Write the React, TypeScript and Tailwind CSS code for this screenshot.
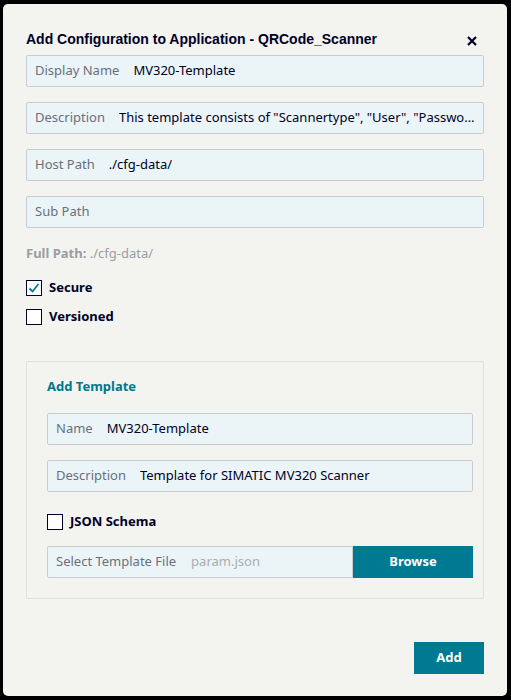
import React from "react";

const font = { fontFamily: '"Noto Sans", "Open Sans", sans-serif' };

function Field({ label, value, className = "" }: { label: string; value?: string; className?: string }) {
  return (
    <div className={`flex h-[32px] min-w-0 items-center overflow-hidden rounded-[2px] border border-[#c9ccd0] bg-[#ebf5f7] px-[8px] text-[13px] ${className}`}>
      <span className="shrink-0 whitespace-nowrap text-[#6b6f7a]">{label}</span>
      {value !== undefined && <span className="ml-[14px] min-w-0 truncate text-[#000028]">{value}</span>}
    </div>
  );
}

function Check({ checked, label }: { checked?: boolean; label: string }) {
  return (
    <div className="flex h-[18px] items-center gap-[7px]">
      <div className="flex h-[16px] w-[16px] items-center justify-center border border-[#000028] bg-white">
        {checked && (
          <svg width="14" height="14" viewBox="0 0 14 14">
            <path d="M2.5 7.5 L5.5 10.5 L11.5 3" fill="none" stroke="#007993" strokeWidth="1.8" />
          </svg>
        )}
      </div>
      <span className="text-[13px] font-bold text-[#000028]">{label}</span>
    </div>
  );
}

export default function App() {
  return (
    <div className="h-[700px] w-[511px] bg-black pl-[3px] pt-[4px]" style={font}>
      <div className="flex h-[692px] w-[504px] flex-col rounded-[5px] bg-[#f3f3ef] pl-[23px] pr-[23px]">
        <div className="mt-[25px] flex h-[20px] items-center justify-between">
          <span
            className="text-[14px] font-bold text-[#000028]"
            style={{ fontFamily: '"Liberation Sans", Arial, sans-serif' }}
          >
            Add Configuration to Application - QRCode_Scanner
          </span>
          <svg width="12" height="12" viewBox="0 0 12 12" className="mr-[6px] mt-[3px]">
            <path d="M2 2 L10 10 M10 2 L2 10" stroke="#000028" strokeWidth="2.2" />
          </svg>
        </div>
        <Field className="mt-[6px]" label="Display Name" value="MV320-Template" />
        <Field className="mt-[15px]" label="Description" value={'This template consists of "Scannertype", "User", "Passwor...'} />
        <Field className="mt-[15px]" label="Host Path" value="./cfg-data/" />
        <Field className="mt-[15px]" label="Sub Path" />
        <div className="mt-[16px] text-[13px] text-[#9a9ea5]">
          <span className="font-bold">Full Path:</span> ./cfg-data/
        </div>
        <div className="mt-[15px]">
          <Check checked label="Secure" />
        </div>
        <div className="mt-[11px]">
          <Check label="Versioned" />
        </div>
        <div className="mt-[35px] flex flex-col rounded-[2px] border border-[#dfe0df] pb-[20px] pl-[20px] pr-[10px]">
          <div className="mt-[15px] text-[13px] font-bold text-[#00788a]">Add Template</div>
          <Field className="mt-[17px]" label="Name" value="MV320-Template" />
          <Field className="mt-[15px]" label="Description" value="Template for SIMATIC MV320 Scanner" />
          <div className="mt-[21px]">
            <Check label="JSON Schema" />
          </div>
          <div className="mt-[15px] flex h-[32px]">
            <div className="flex flex-1 items-center rounded-l-[2px] border border-[#c9ccd0] bg-[#ebf5f7] px-[8px] text-[13px]">
              <span className="text-[#6b6f7a]">Select Template File</span>
              <span className="ml-[15px] text-[#a9adb3]">param.json</span>
            </div>
            <button className="w-[120px] bg-[#007993] text-[13px] font-bold text-white">Browse</button>
          </div>
        </div>
        <div className="mt-[43px] flex justify-end">
          <button className="h-[32px] w-[70px] bg-[#007993] text-[13px] font-bold text-white">Add</button>
        </div>
      </div>
    </div>
  );
}
